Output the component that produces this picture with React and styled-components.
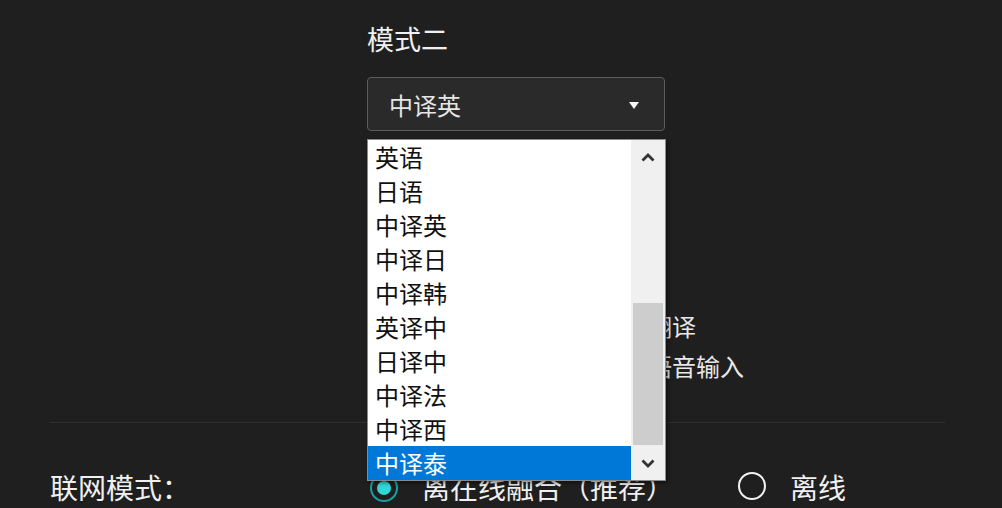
import React from 'react';
import styled, { createGlobalStyle } from 'styled-components';

const GlobalStyle = createGlobalStyle`
  html, body {
    margin: 0;
    padding: 0;
    background: #1f1f1f;
    overflow: hidden;
  }
  body {
    font-family: "Noto Sans CJK SC", "Noto Sans", sans-serif;
  }
`;

const Page = styled.div`
  width: 1002px;
  height: 508px;
  box-sizing: border-box;
  padding: 0 57px 0 50px;
  color: #ececec;
`;

const ModeSection = styled.section`
  display: flex;
  flex-direction: column;
  padding-left: 317px;
`;

const Title = styled.div`
  margin-top: 21px;
  font-size: 27px;
  line-height: 36px;
  color: #f0f0f0;
`;

const SelectWrap = styled.div`
  position: relative;
  margin-top: 20px;
  width: 298px;
`;

const SelectBox = styled.div`
  box-sizing: border-box;
  height: 54px;
  display: flex;
  align-items: center;
  justify-content: space-between;
  padding: 0 25px 0 21px;
  background: #2a2a2a;
  border: 1px solid #5c5c5c;
  border-radius: 4px;
  font-size: 24px;
  color: #e6e6e6;
`;

const Caret = styled.span`
  width: 0;
  height: 0;
  border-left: 5px solid transparent;
  border-right: 5px solid transparent;
  border-top: 7px solid #f4f4f4;
  margin-top: 2px;
`;

const Dropdown = styled.div`
  position: absolute;
  top: 62px;
  left: 0;
  z-index: 10;
  width: 299px;
  box-sizing: border-box;
  display: flex;
  background: #ffffff;
  border: 1px solid #8a8a8a;
  box-shadow: 2px 2px 4px rgba(0, 0, 0, 0.45);
`;

const List = styled.div`
  flex: 1;
  display: flex;
  flex-direction: column;
`;

const Item = styled.div`
  height: 34px;
  line-height: 34px;
  padding-left: 7px;
  font-size: 24px;
  color: ${({ $active }) => ($active ? '#ffffff' : '#111111')};
  background: ${({ $active }) => ($active ? '#0078d7' : 'transparent')};
`;

const Scrollbar = styled.div`
  width: 34px;
  display: flex;
  flex-direction: column;
  background: #f0f0f0;
`;

const ArrowBtn = styled.div`
  height: 34px;
  display: flex;
  align-items: center;
  justify-content: center;
`;

const Track = styled.div`
  flex: 1;
  display: flex;
  flex-direction: column;
  justify-content: flex-end;
  padding: 0 2px 1px;
`;

const Thumb = styled.div`
  height: 142px;
  background: #cdcdcd;
`;

const Options = styled.div`
  margin-top: 174px;
  display: grid;
  grid-template-columns: 253px auto;
  grid-auto-rows: 40px;
  font-size: 24px;
`;

const Option = styled.div`
  display: flex;
  align-items: center;
  gap: 8px;
  white-space: nowrap;
  color: #e8e8e8;
`;

const SmallRadio = styled.span`
  width: 16px;
  height: 16px;
  border: 2px solid #e8e8e8;
  border-radius: 50%;
`;

const Divider = styled.div`
  margin-top: 37px;
  height: 1px;
  background: #2f2f2f;
`;

const NetRow = styled.div`
  margin-top: 44px;
  display: grid;
  grid-template-columns: 320px 368px auto;
  align-items: center;
  height: 40px;
  font-size: 28px;
`;

const Label = styled.div`
  color: #f0f0f0;
`;

const Radio = styled.label`
  display: flex;
  align-items: center;
  gap: 24px;
  color: #f0f0f0;
  white-space: nowrap;
`;

const RadioDot = styled.span`
  box-sizing: border-box;
  width: 28px;
  height: 28px;
  border-radius: 50%;
  display: flex;
  align-items: center;
  justify-content: center;
  border: 2px solid ${({ $on }) => ($on ? '#1a9fa3' : '#f2f2f2')};
  margin-top: ${({ $on }) => ($on ? '2px' : '-2px')};

  &::after {
    content: '';
    width: 14px;
    height: 14px;
    border-radius: 50%;
    background: ${({ $on }) => ($on ? '#33d6d6' : 'transparent')};
  }
`;

const Chevron = ({ down }) => (
  <svg width="14" height="9" viewBox="0 0 14 9">
    <path
      d={down ? 'M1.5 1.5 L7 7 L12.5 1.5' : 'M1.5 7.5 L7 2 L12.5 7.5'}
      fill="none"
      stroke="#333333"
      strokeWidth="2.8"
    />
  </svg>
);

const items = ['英语', '日语', '中译英', '中译日', '中译韩', '英译中', '日译中', '中译法', '中译西', '中译泰'];

export default function App() {
  return (
    <>
      <GlobalStyle />
      <Page>
        <ModeSection>
          <Title>模式二</Title>
          <SelectWrap>
            <SelectBox>
              <span>中译英</span>
              <Caret />
            </SelectBox>
            <Dropdown>
              <List>
                {items.map((it, i) => (
                  <Item key={it} $active={i === items.length - 1}>{it}</Item>
                ))}
              </List>
              <Scrollbar>
                <ArrowBtn><Chevron /></ArrowBtn>
                <Track><Thumb /></Track>
                <ArrowBtn><Chevron down /></ArrowBtn>
              </Scrollbar>
            </Dropdown>
          </SelectWrap>
          <Options>
            <span />
            <Option><SmallRadio />翻译</Option>
            <span />
            <Option><SmallRadio />语音输入</Option>
          </Options>
        </ModeSection>
        <Divider />
        <NetRow>
          <Label>联网模式：</Label>
          <Radio><RadioDot $on />离在线融合（推荐）</Radio>
          <Radio><RadioDot />离线</Radio>
        </NetRow>
      </Page>
    </>
  );
}
